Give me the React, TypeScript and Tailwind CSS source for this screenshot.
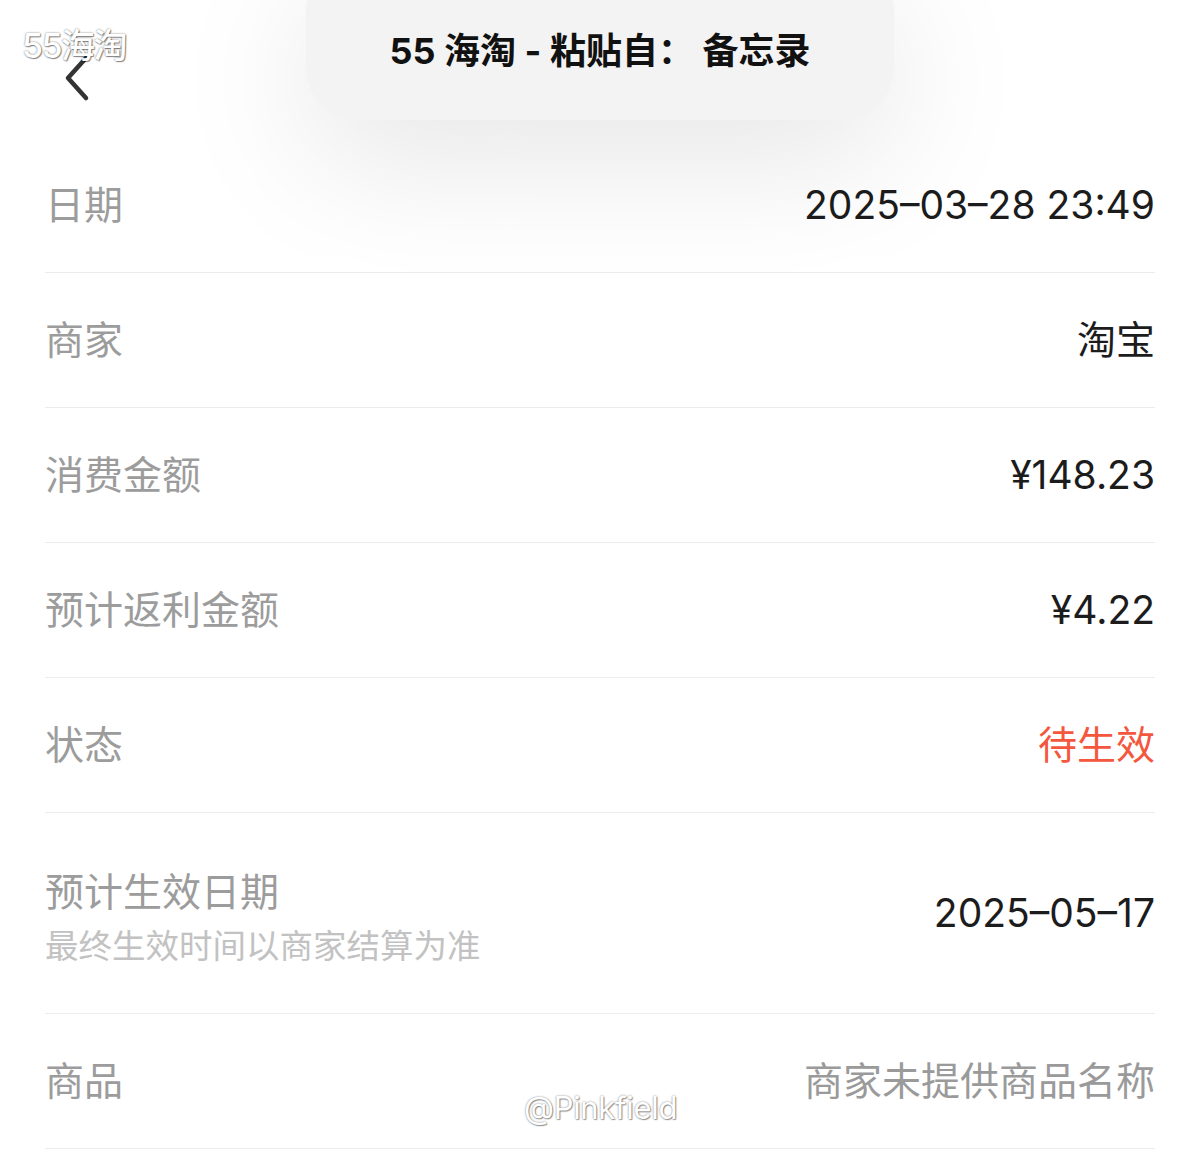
import type { ReactNode } from "react";

const FONT = "font-['Inter','Noto_Sans_CJK_SC',sans-serif]";

type Row = { label: string; value: ReactNode; sub?: string; tone?: "dark" | "red" | "muted" };

const ROWS: Row[] = [
  { label: "日期", value: "2025–03–28 23:49" },
  { label: "商家", value: "淘宝" },
  { label: "消费金额", value: "¥148.23" },
  { label: "预计返利金额", value: "¥4.22" },
  { label: "状态", value: "待生效", tone: "red" },
  { label: "预计生效日期", value: "2025–05–17", sub: "最终生效时间以商家结算为准" },
  { label: "商品", value: "商家未提供商品名称", tone: "muted" },
];

function BackChevron() {
  return (
    <svg width="28" height="48" viewBox="0 0 28 48" fill="none">
      <path d="M22 4 L4 24 L22 44" stroke="#333" strokeWidth="4.5" strokeLinecap="round" strokeLinejoin="round" />
    </svg>
  );
}

function DetailRow({ row }: { row: Row }) {
  const valueColor =
    row.tone === "red" ? "text-[#f4573d]" : row.tone === "muted" ? "text-[#9a9a9a]" : "text-[#1c1c1c]";
  return (
    <div
      className={`flex items-center justify-between border-b border-[#ececec] ${
        row.sub ? "h-[201px] pt-[8px]" : "h-[135px]"
      }`}
    >
      <div className="flex flex-col">
        <span className="text-[39px] leading-[52px] text-[#9c9c9c]">{row.label}</span>
        {row.sub && <span className="mt-[6px] text-[33.5px] leading-[44px] text-[#c2c2c2]">{row.sub}</span>}
      </div>
      <span className={`text-[39px] leading-[52px] ${row.sub ? "-mt-[8px]" : ""} ${valueColor}`}>{row.value}</span>
    </div>
  );
}

export default function App() {
  return (
    <div className={`relative h-[1151px] w-[1200px] overflow-hidden bg-white ${FONT}`}>
      <div className="relative h-[138px]">
        <div className="absolute left-[64px] top-[54px]">
          <BackChevron />
        </div>
        <div className="absolute left-[306px] top-[-40px] flex h-[160px] w-[588px] items-end justify-center rounded-[52px] bg-[#f3f3f3] pb-[47px] shadow-[0_40px_140px_rgba(0,0,0,0.10)]">
          <span className="text-[36px] font-bold leading-[44px] text-[#111]">55 海淘 - 粘贴自： 备忘录</span>
        </div>
      </div>

      <div className="px-[45px]">
        {ROWS.map((row) => (
          <DetailRow key={row.label} row={row} />
        ))}
      </div>

      <span className="absolute left-[22px] top-[20px] text-[34px] font-medium tracking-[-1.5px] text-white [text-shadow:0_0_2px_rgba(0,0,0,0.55),1px_1px_1px_rgba(0,0,0,0.4)]">
        55海淘
      </span>
      <span className="absolute left-[524px] top-[1085px] text-[31px] tracking-[-0.3px] text-white [text-shadow:0_0_2px_rgba(0,0,0,0.5),1px_1px_1px_rgba(0,0,0,0.35)]">
        @Pinkfield
      </span>
    </div>
  );
}
